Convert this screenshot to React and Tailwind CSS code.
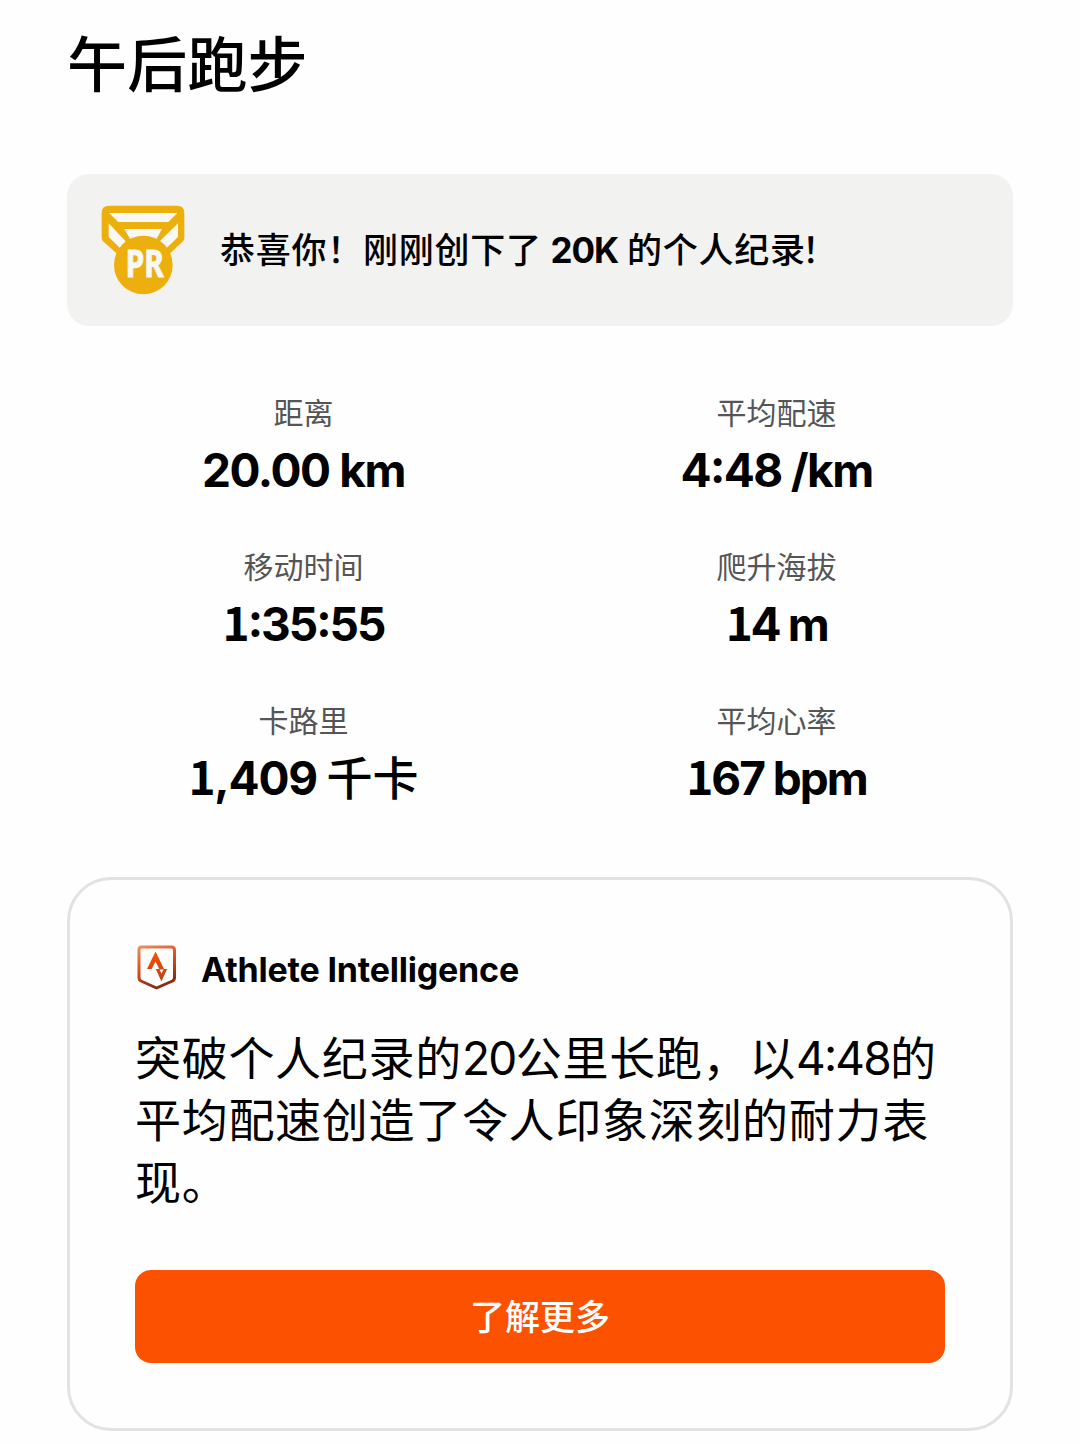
import React from "react";

const stats = [
  { label: "距离", value: "20.00 km", tracking: "tracking-[-1.4px]" },
  { label: "平均配速", value: "4:48 /km", tracking: "tracking-[-1.6px]" },
  { label: "移动时间", value: "1:35:55", tracking: "tracking-[-2px]" },
  { label: "爬升海拔", value: "14 m", tracking: "tracking-[-2.4px]" },
  { label: "卡路里", value: "1,409 千卡", tracking: "tracking-[-1.2px]" },
  { label: "平均心率", value: "167 bpm", tracking: "tracking-[-2px]" },
];

const MedalIcon = () => (
  <svg viewBox="120 118 258 276" className="h-[92px] w-[86px] shrink-0">
    <path
      d="M147 123H351Q373 123 373 145V220Q373 226 369 230L328 268H172L129 230Q125 226 125 220V145Q125 123 147 123Z"
      fill="#ecaf0e"
    />
    <path
      d="M147 145H352L325 172H175Z M193 193H306L290 222H210Z M146 176L197 230L180 250L146 217Z M354 176V217L320 250L299 230Z"
      fill="#f8f8f4"
    />
    <circle cx="250" cy="301" r="88" fill="#ecaf0e" />
    <text
      x="254"
      y="338"
      textAnchor="middle"
      textLength="114"
      lengthAdjust="spacingAndGlyphs"
      fontSize="112"
      fontWeight="700"
      fill="#f8f8f4"
      stroke="#f8f8f4"
      strokeWidth="3"
      className="font-['Noto_Sans',sans-serif]"
    >
      PR
    </text>
  </svg>
);

const ShieldIcon = () => (
  <svg viewBox="0 0 40 45" className="ml-[2px] h-[45px] w-[40px] shrink-0">
    <defs>
      <linearGradient id="shield" x1="0" y1="0" x2="0.35" y2="1">
        <stop offset="0" stopColor="#ee8a60" />
        <stop offset="0.45" stopColor="#dc5520" />
        <stop offset="1" stopColor="#8a2c10" />
      </linearGradient>
      <linearGradient id="mark" x1="0" y1="0" x2="0" y2="1">
        <stop offset="0" stopColor="#fc5200" />
        <stop offset="1" stopColor="#b8431a" />
      </linearGradient>
    </defs>
    <path
      d="M4.5 2H34.5Q37.5 2 37.5 5V32.5Q37.5 35 35.5 36L19.5 43L4 36Q2 35 2 32.5V5Q2 2 4.5 2Z"
      fill="none"
      stroke="url(#shield)"
      strokeWidth="3"
      strokeLinejoin="round"
    />
    <path
      d="M10 24L18.5 6.5L27 24H30.2L24.4 36.5L18.8 24H22.3L18.5 16.5L14.7 24ZM22.6 24.6L24.4 28.6L26.6 24.6Z"
      fill="url(#mark)"
      fillRule="evenodd"
    />
  </svg>
);

// Inter's 1 has no foot, so that digit comes from the CJK face.
// Colons in times sit at the middle of the digits instead of on the baseline.
const Value = ({ text }) =>
  text.split(/(:|1|[\u4e00-\u9fff]+)/).map((part, i) => {
    if (part === ":") {
      return (
        <span
          key={i}
          className="inline-block -translate-y-[0.09em] font-['Inter',sans-serif] leading-none"
        >
          :
        </span>
      );
    }
    if (part === "1") {
      return <span key={i}>1</span>;
    }
    if (/[\u4e00-\u9fff]/.test(part)) {
      return (
        <span key={i} className="font-medium tracking-normal">
          {part}
        </span>
      );
    }
    return (
      <span key={i} className="font-['Inter',sans-serif] leading-none">
        {part}
      </span>
    );
  });

const App = () => {
  return (
    <main
      lang="zh-CN"
      className="h-[1445px] w-[1080px] overflow-hidden bg-[#fefefe] px-[67px] pt-[21px] font-['Noto_Sans_CJK_SC',sans-serif] text-black"
    >
      <h1 className="text-[60px] leading-[80px] font-medium tracking-[0.2px]">
        午后跑步
      </h1>

      <section className="mt-[73px] flex h-[152px] items-center rounded-[22px] bg-[#f2f2f0] pl-[33px]">
        <MedalIcon />
        <p className="ml-[34px] -mt-[2px] text-[35px] font-medium tracking-[0.75px] whitespace-pre">
          恭喜你！刚刚创下了{" "}
          <span className="font-['Inter',sans-serif] font-bold tracking-[-1px]">
            20K
          </span>{" "}
          的个人纪<span className="-tracking-[3px]">录</span>！
        </p>
      </section>

      <dl className="mt-[64px] grid grid-cols-2 gap-y-[32px] text-center">
        {stats.map((stat) => (
          <div key={stat.label} className="h-[122px]">
            <dt className="text-[30px] leading-[42px] text-[#555]">
              {stat.label}
            </dt>
            <dd
              className={`text-[46px] leading-[70px] font-bold whitespace-pre ${stat.tracking}`}
            >
              <Value text={stat.value} />
            </dd>
          </div>
        ))}
      </dl>

      <section className="mt-[57px] h-[554px] rounded-[44px] border-[3px] border-[#e2e2e1] px-[65px] pt-[63px]">
        <div className="flex h-[48px] items-center">
          <ShieldIcon />
          <h2 className="mt-[5px] ml-[24px] font-['Inter',sans-serif] text-[34px] font-bold tracking-[-0.2px]">
            Athlete Intelligence
          </h2>
        </div>
        <p className="mt-[33px] text-[46px] leading-[62px] tracking-[0.7px] whitespace-nowrap">
          突破个人纪录的
          <span className="font-['Inter',sans-serif] leading-none tracking-[-1.6px]">
            20
          </span>
          公里长跑，以
          <span className="tracking-[-1.8px]">
            <Value text="4:48" />
          </span>
          的
          <br />
          平均配速创造了令人印象深刻的耐力表
          <br />
          现。
        </p>
        <button className="mt-[60px] h-[93px] w-full rounded-[16px] bg-[#fc5200] pb-[3px] text-[35px] font-medium text-white">
          了解更多
        </button>
      </section>
    </main>
  );
};

export default App;
